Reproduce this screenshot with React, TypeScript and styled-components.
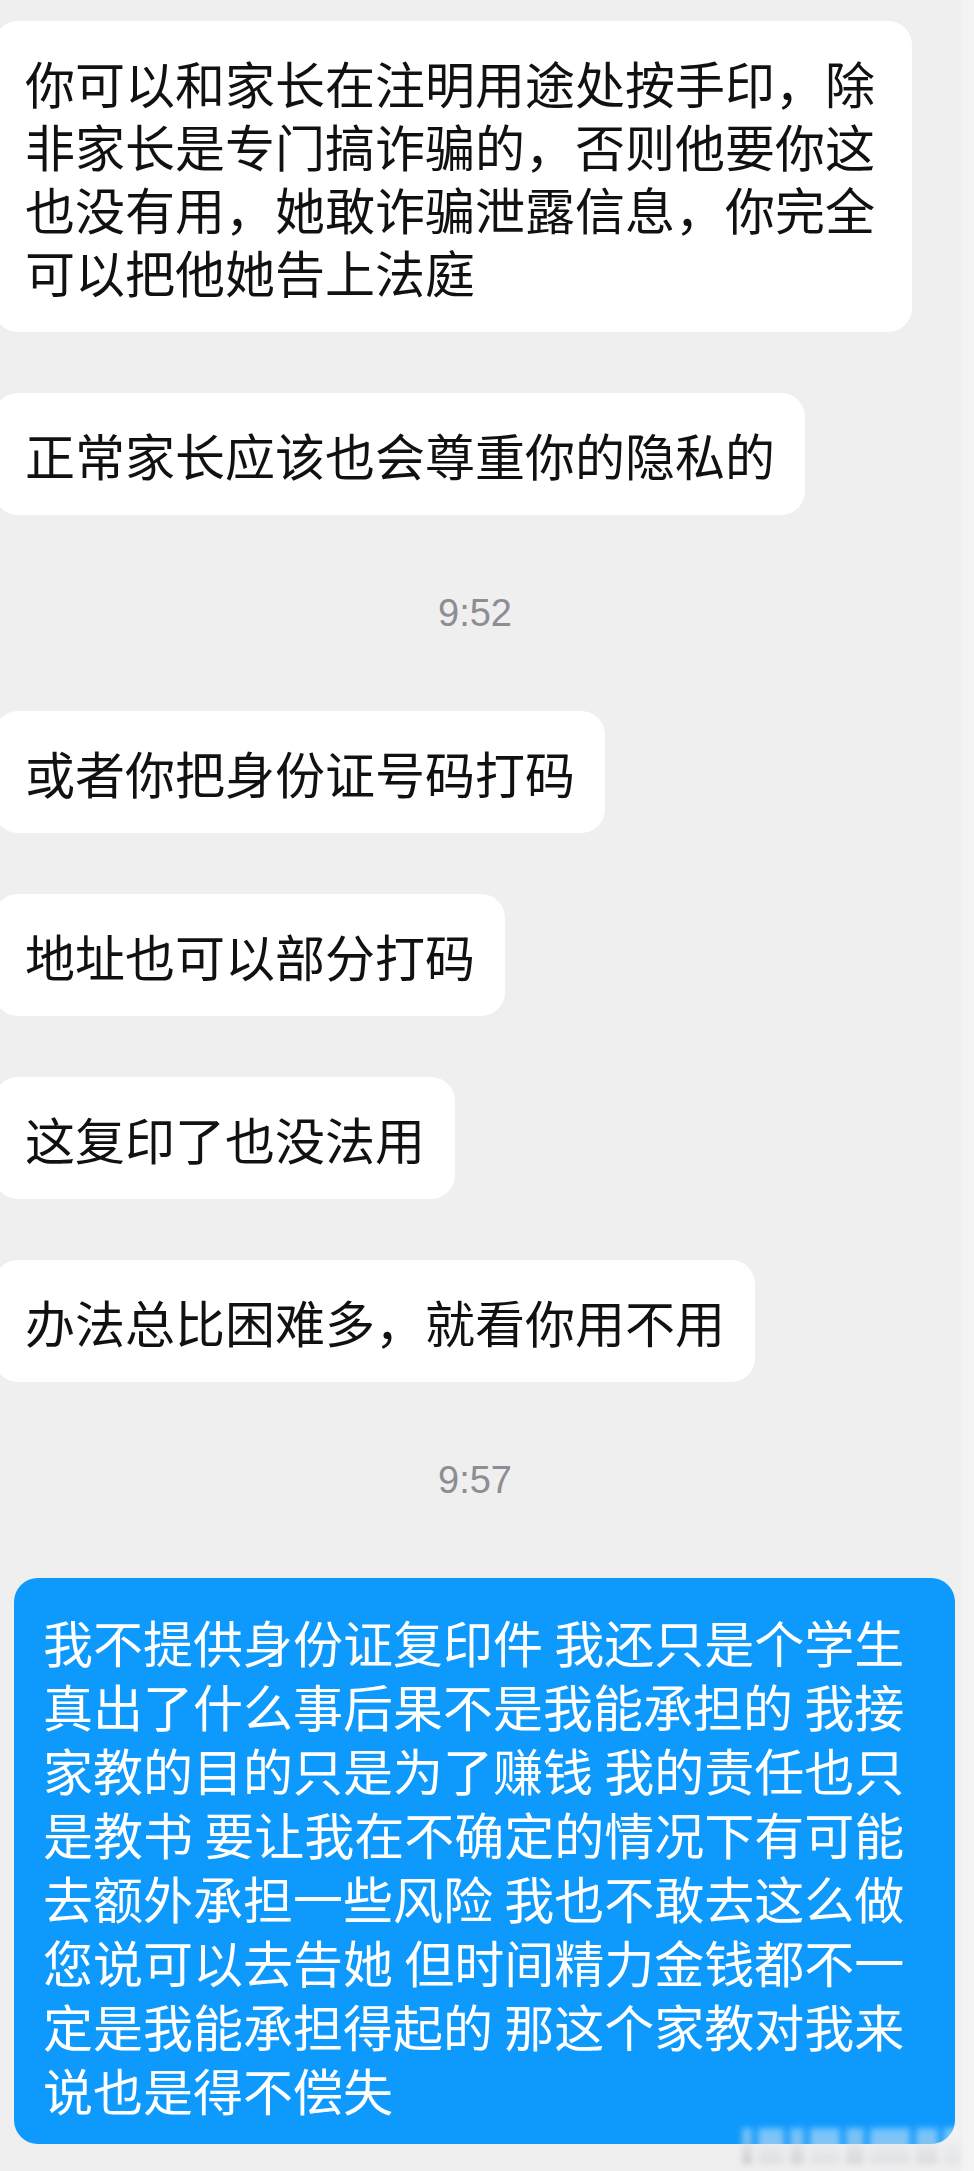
import React, { FC } from 'react';
import styled, { createGlobalStyle } from 'styled-components';

const GlobalStyle = createGlobalStyle`
  html, body {
    margin: 0;
    padding: 0;
    background: #efefef;
  }
  * { box-sizing: border-box; }
`;

const Page = styled.div`
  position: relative;
  width: 974px;
  min-height: 2171px;
  overflow: hidden;
  padding: 21px 0 28px;
  display: flex;
  flex-direction: column;
  align-items: flex-start;
  background: linear-gradient(to right, #efefef 962px, #f3f3f3 962px);
  font-family: "Noto Sans CJK SC", "Noto Sans", sans-serif;
`;

const Bubble = styled.div<{ $gap?: number }>`
  margin: ${p => p.$gap ?? 0}px 0 0 -6px;
  width: fit-content;
  max-width: 918px;
  padding: 30px 30px 29px 31px;
  background: #ffffff;
  border-radius: 24px;
  color: #111;
  font-size: 50px;
  line-height: 63px;
`;

const OwnBubble = styled.div`
  margin: 0 0 0 14px;
  width: 941px;
  padding: 31px 40px 23px 29px;
  background: #0e99fc;
  border-radius: 24px;
  color: #ffffff;
  font-size: 50px;
  line-height: 64px;
`;

const TimeRow = styled.div`
  align-self: stretch;
  margin: 62px 24px 62px 0;
  height: 72px;
  line-height: 72px;
  text-align: center;
  font-family: "Liberation Sans", Arial, sans-serif;
  font-size: 38px;
  color: #8d8d93;
`;

const Watermark = styled.div`
  position: absolute;
  left: 742px;
  top: 2128px;
  width: 220px;
  height: 36px;
  display: flex;
  gap: 6px;
  align-items: stretch;
  filter: blur(3px);
  opacity: 0.7;
`;

const Smudge = styled.span<{ $w: number; $shade: string }>`
  width: ${p => p.$w}px;
  background: linear-gradient(to bottom, rgba(255, 255, 255, 0.6), ${p => p.$shade});
`;

const smudges = [
  { w: 10, shade: '#b9bcc4' },
  { w: 26, shade: '#d4d7de' },
  { w: 14, shade: '#c4c7cf' },
  { w: 30, shade: '#d8dbe1' },
  { w: 18, shade: '#c8cbd2' },
  { w: 40, shade: '#d6d9df' },
  { w: 22, shade: '#cfd2d8' },
  { w: 16, shade: '#dcdee3' },
];

const incoming = [
  '你可以和家长在注明用途处按手印，除非家长是专门搞诈骗的，否则他要你这也没有用，她敢诈骗泄露信息，你完全可以把他她告上法庭',
  '正常家长应该也会尊重你的隐私的',
];

const incomingLater = [
  '或者你把身份证号码打码',
  '地址也可以部分打码',
  '这复印了也没法用',
  '办法总比困难多，就看你用不用',
];

const reply =
  '我不提供身份证复印件 我还只是个学生 真出了什么事后果不是我能承担的 我接家教的目的只是为了赚钱 我的责任也只是教书 要让我在不确定的情况下有可能去额外承担一些风险 我也不敢去这么做 您说可以去告她 但时间精力金钱都不一定是我能承担得起的 那这个家教对我来说也是得不偿失';

const App: FC = () => {
  return (
    <Page>
      <GlobalStyle />
      {incoming.map((text, i) => (
        <Bubble key={text} $gap={i === 0 ? 0 : 61}>{text}</Bubble>
      ))}
      <TimeRow>9:52</TimeRow>
      {incomingLater.map((text, i) => (
        <Bubble key={text} $gap={i === 0 ? 0 : 61}>{text}</Bubble>
      ))}
      <TimeRow>9:57</TimeRow>
      <OwnBubble>{reply}</OwnBubble>
      <Watermark>
        {smudges.map((s, i) => (
          <Smudge key={i} $w={s.w} $shade={s.shade} />
        ))}
      </Watermark>
    </Page>
  );
};

export default App;
